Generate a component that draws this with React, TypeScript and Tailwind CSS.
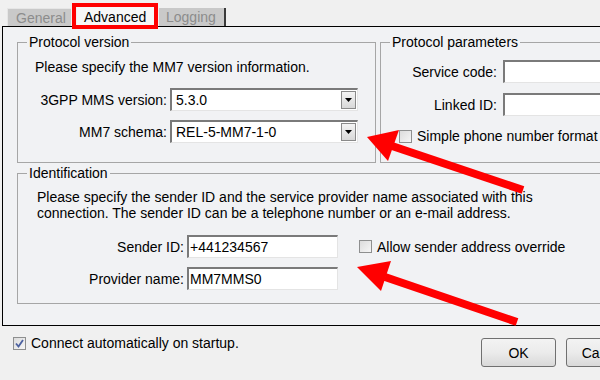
import type { ReactNode } from "react";

function Checkbox({ checked = false }: { checked?: boolean }) {
  return (
    <span className="w-[13px] h-[13px] shrink-0 border border-[#8e8f8f] bg-gradient-to-br from-[#dcdcdc] to-[#f6f6f6] flex items-center justify-center">
      {checked && (
        <svg width="9" height="9" viewBox="0 0 9 9">
          <path d="M1 4.5 L3.5 7.5 L8 1" fill="none" stroke="#4c61a0" strokeWidth="1.8" />
        </svg>
      )}
    </span>
  );
}

function Field({ value = "", className = "" }: { value?: string; className?: string }) {
  return (
    <div
      className={`h-[23px] bg-white border-t-2 border-l-2 border-t-[#7a7a7a] border-l-[#7a7a7a] border-b border-r border-b-[#e4e4e4] border-r-[#e4e4e4] pl-[1px] flex items-center ${className}`}
    >
      {value}
    </div>
  );
}

function Combo({ value }: { value: string }) {
  return (
    <div className="w-[188px] h-[23px] bg-white border-t-2 border-l-2 border-t-[#7a7a7a] border-l-[#7a7a7a] border-b border-r border-b-[#e4e4e4] border-r-[#e4e4e4] flex items-center">
      <span className="flex-1 pl-[4px]">{value}</span>
      <span className="w-[15px] h-[18px] mr-[1px] border border-[#8a8a8a] bg-gradient-to-b from-[#f4f4f4] to-[#d8d8d8] flex items-center justify-center">
        <svg width="7" height="4" viewBox="0 0 7 4">
          <path d="M0 0 H7 L3.5 4 Z" fill="#000" />
        </svg>
      </span>
    </div>
  );
}

function Group({ title, className, children }: { title: string; className: string; children: ReactNode }) {
  return (
    <fieldset className={`border border-[#a6a6a6] ${className}`}>
      <legend className="ml-[9px] px-[2px] leading-[16px]">{title}</legend>
      {children}
    </fieldset>
  );
}

export default function App() {
  return (
    <div className="relative w-[600px] h-[380px] overflow-hidden bg-[#f0f0f0] text-[14px] leading-[16px] text-black font-['Liberation_Sans',Arial,sans-serif]">
      {/* tabs */}
      <div className="flex items-end h-[26px] pl-[7px]">
        <div className="w-[64px] h-[18px] bg-[#c9c9c9] text-[#8c8c8c] border-t border-l border-[#e6e6e6] pl-[8px] pt-[1px]">General</div>
        <div className="w-[6px]" />
        <div className="w-[77px] h-[19px] bg-[#f7f7f7] pl-[7px] pt-[2px]">Advanced</div>
        <div className="w-[5px]" />
        <div className="w-[67px] h-[18px] bg-[#c9c9c9] text-[#8c8c8c] border-r-2 border-[#3a3a3a] pl-[7px] pt-[1px]">Logging</div>
      </div>

      {/* tab panel */}
      <div className="ml-[2px] w-[680px] h-[300px] border border-black bg-[#f1f2f4] pl-[14px] pt-[7px]">
        <div className="flex gap-[4px]">
          <Group title="Protocol version" className="w-[359px] h-[129px]">
            <div className="pl-[17px] mt-[9px]">Please specify the MM7 version information.</div>
            <div className="flex items-center mt-[13px]">
              <div className="w-[149px] text-right">3GPP MMS version:</div>
              <div className="ml-[3px]"><Combo value="5.3.0" /></div>
            </div>
            <div className="flex items-center mt-[9px]">
              <div className="w-[149px] text-right">MM7 schema:</div>
              <div className="ml-[3px]"><Combo value="REL-5-MM7-1-0" /></div>
            </div>
          </Group>
          <Group title="Protocol parameters" className="w-[300px] h-[129px]">
            <div className="flex items-center mt-[10px]">
              <div className="w-[116px] text-right">Service code:</div>
              <Field className="ml-[6px] w-[140px]" />
            </div>
            <div className="flex items-center mt-[10px]">
              <div className="w-[116px] text-right">Linked ID:</div>
              <Field className="ml-[6px] w-[140px]" />
            </div>
            <div className="flex items-center gap-[5px] pl-[18px] mt-[12px]">
              <Checkbox />
              <span>Simple phone number format</span>
            </div>
          </Group>
        </div>

        <Group title="Identification" className="mt-[2px] w-[640px] h-[139px]">
          <div className="pl-[19px] mt-[8px]">
            Please specify the sender ID and the service provider name associated with this
            <br />
            connection. The sender ID can be a telephone number or an e-mail address.
          </div>
          <div className="flex items-center mt-[14px]">
            <div className="w-[166px] text-right">Sender ID:</div>
            <Field value="+441234567" className="ml-[3px] w-[151px]" />
            <div className="flex items-center gap-[5px] ml-[21px]">
              <Checkbox />
              <span>Allow sender address override</span>
            </div>
          </div>
          <div className="flex items-center mt-[9px]">
            <div className="w-[166px] text-right">Provider name:</div>
            <Field value="MM7MMS0" className="ml-[3px] w-[151px]" />
          </div>
        </Group>
      </div>

      {/* bottom row */}
      <div className="flex items-start w-[700px] pl-[13px]">
        <div className="w-[468px] flex items-center gap-[5px] mt-[9px]">
          <Checkbox checked />
          <span>Connect automatically on startup.</span>
        </div>
        <button className="mt-[12px] w-[75px] h-[29px] rounded-[3px] border border-[#707070] bg-gradient-to-b from-[#f3f3f3] via-[#ebebeb] to-[#d9d9d9] text-[14px]">OK</button>
        <button className="mt-[12px] ml-[10px] w-[75px] h-[29px] rounded-[3px] border border-[#707070] bg-gradient-to-b from-[#f3f3f3] via-[#ebebeb] to-[#d9d9d9] text-[14px]">Cancel</button>
      </div>

      {/* annotations */}
      <div className="absolute left-[72px] top-[3px] w-[86px] h-[26px] border-4 border-[#ff0000] pointer-events-none" />
      <svg className="absolute inset-0 pointer-events-none" width="600" height="380" viewBox="0 0 600 380">
        <line x1="392" y1="146" x2="523" y2="190" stroke="#ff0000" strokeWidth="8" />
        <polygon points="367,137 399,130 388,161" fill="#ff0000" />
        <line x1="385" y1="277" x2="517" y2="322" stroke="#ff0000" strokeWidth="8" />
        <polygon points="357,267 391,261 381,291" fill="#ff0000" />
      </svg>
    </div>
  );
}
